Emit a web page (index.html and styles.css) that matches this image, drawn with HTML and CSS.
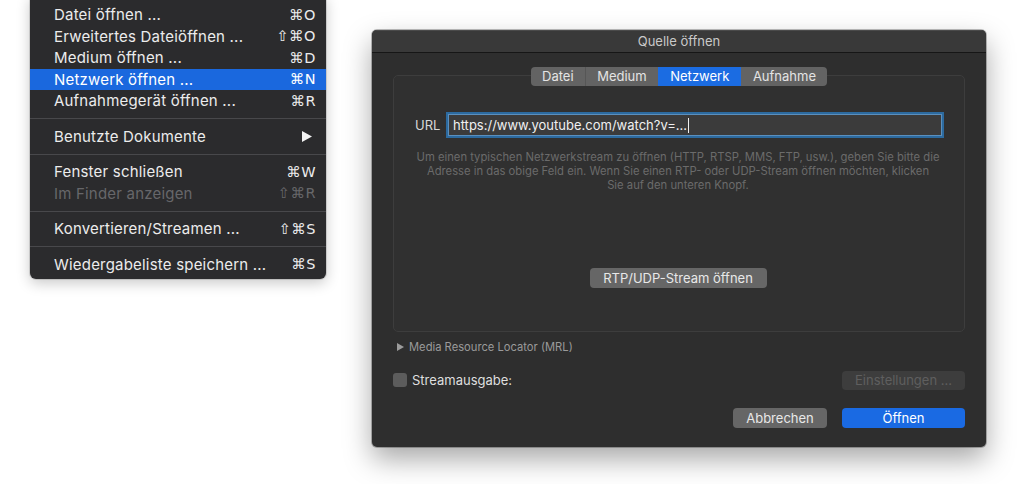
FILE: index.html
```html
<!DOCTYPE html>
<html lang="de">
<head>
<meta charset="utf-8">
<title>Quelle öffnen</title>
<link rel="stylesheet" href="styles.css">
</head>
<body>
<div class="desktop">
  <div class="menu">
    <div class="item"><span>Datei öffnen ...</span><span class="sc">⌘O</span></div>
    <div class="item"><span>Erweitertes Dateiöffnen ...</span><span class="sc">⇧⌘O</span></div>
    <div class="item"><span>Medium öffnen ...</span><span class="sc">⌘D</span></div>
    <div class="item selected"><span>Netzwerk öffnen ...</span><span class="sc">⌘N</span></div>
    <div class="item"><span>Aufnahmegerät öffnen ...</span><span class="sc">⌘R</span></div>
    <div class="sep"></div>
    <div class="item"><span>Benutzte Dokumente</span><svg class="sub" width="10" height="11" viewBox="0 0 10 11"><path d="M0 0 L10 5.5 L0 11 Z" fill="#f2f2f2"/></svg></div>
    <div class="sep"></div>
    <div class="item"><span>Fenster schließen</span><span class="sc">⌘W</span></div>
    <div class="item disabled"><span>Im Finder anzeigen</span><span class="sc">⇧⌘R</span></div>
    <div class="sep"></div>
    <div class="item"><span>Konvertieren/Streamen ...</span><span class="sc">⇧⌘S</span></div>
    <div class="sep"></div>
    <div class="item"><span>Wiedergabeliste speichern ...</span><span class="sc">⌘S</span></div>
  </div>

  <div class="dialog">
    <div class="titlebar">Quelle öffnen</div>
    <div class="dbody">
      <div class="tabs">
        <span class="tab">Datei</span><span class="tab">Medium</span><span class="tab active">Netzwerk</span><span class="tab">Aufnahme</span>
      </div>
      <div class="panel">
        <div class="urlrow">
          <span class="urllabel">URL</span>
          <div class="field">https://www.youtube.com/watch?v=...<span class="caret"></span></div>
        </div>
        <p class="help">Um einen typischen Netzwerkstream zu öffnen (HTTP, RTSP, MMS, FTP, usw.), geben Sie bitte die<br>Adresse in das obige Feld ein. Wenn Sie einen RTP- oder UDP-Stream öffnen möchten, klicken<br>Sie auf den unteren Knopf.</p>
        <div class="center"><span class="btn rtp">RTP/UDP-Stream öffnen</span></div>
      </div>
      <div class="mrl"><svg class="disc" width="7" height="8" viewBox="0 0 7 8"><path d="M0 0 L7 4 L0 8 Z" fill="#9c9c9c"/></svg><span>Media Resource Locator (MRL)</span></div>
      <div class="streamrow">
        <span class="chk"></span><span class="streamlabel">Streamausgabe:</span>
        <span class="btn disabledbtn">Einstellungen ...</span>
      </div>
      <div class="actions">
        <span class="btn cancel">Abbrechen</span>
        <span class="btn primary">Öffnen</span>
      </div>
    </div>
  </div>
</div>
</body>
</html>
```
FILE: styles.css
```css
* { box-sizing: border-box; }
html, body { margin: 0; padding: 0; }
body {
  background: #ffffff;
  width: 1024px;
  height: 484px;
  overflow: hidden;
  font-family: Inter, "Noto Sans", "DejaVu Sans", sans-serif;
}
.desktop { position: relative; width: 1024px; height: 484px; }

/* ---------- menu ---------- */
.menu {
  position: absolute;
  left: 30px;
  top: -6px;
  width: 296px;
  padding: 10px 0 4px;
  background: #2b2b2d;
  border-radius: 6px;
  box-shadow: 0 4px 14px rgba(0,0,0,0.22), 0 0 0 1px rgba(0,0,0,0.12);
  color: #ececec;
  font-size: 15px;
  letter-spacing: 0.2px;
}
.item {
  height: 21.5px;
  display: flex;
  align-items: center;
  justify-content: space-between;
  padding: 0 10px 0 24px;
  white-space: nowrap;
}
.item.selected { background: #1a68de; color: #fff; }
.item.disabled { color: #67676a; }
.sc { letter-spacing: 0.5px; font-family: "DejaVu Sans", Inter, sans-serif; font-size: 14.5px; }
.sub { margin-right: 4px; }
.sep {
  height: 14px;
  display: flex;
  align-items: center;
}
.sep::after {
  content: "";
  display: block;
  width: 100%;
  height: 1px;
  background: #48484b;
}

/* ---------- dialog ---------- */
.dialog {
  position: absolute;
  left: 372px;
  top: 30px;
  width: 614px;
  height: 417px;
  background: #2e2e2e;
  border-radius: 5px;
  box-shadow: 0 12px 28px rgba(0,0,0,0.35), 0 0 0 1px rgba(0,0,0,0.25);
  color: #dcdcdc;
  font-size: 13px;
  overflow: hidden;
}
.titlebar {
  height: 23px;
  background: #393939;
  border-bottom: 1px solid #161616;
  box-shadow: inset 0 1px 0 #4a4a4a;
  text-align: center;
  line-height: 23px;
  color: #c9c9c9;
  font-size: 13px;
}
.dbody {
  padding: 14px 21px 19px;
  display: flex;
  flex-direction: column;
}
.tabs {
  align-self: center;
  display: flex;
  height: 19px;
  position: relative;
  z-index: 2;
  border-radius: 4px;
  overflow: hidden;
  background: #636363;
}
.tab {
  line-height: 19px;
  padding: 0 11.3px;
  color: #e4e4e4;
  border-left: 1px solid #565656;
}
.tab:first-child { border-left: none; }
.tab.active { background: #1b6ce2; color: #ffffff; border-left-color: #1b6ce2; }
.tab.active + .tab { border-left-color: #636363; }

.panel {
  margin-top: -11px;
  height: 257px;
  border: 1px solid #3d3d3d;
  border-radius: 5px;
  background: #303030;
  padding: 39px 23px 0 21px;
}
.urlrow {
  display: flex;
  align-items: center;
}
.urllabel { width: 25px; color: #d8d8d8; }
.field {
  margin-left: 9px;
  flex: 1;
  height: 20px;
  line-height: 20px;
  padding-left: 4px;
  background: #3b3b3b;
  color: #f0f0f0;
  box-shadow: 0 0 0 1px #5b8fbd, 0 0 0 3px #2c6a9f;
  white-space: nowrap;
}
.caret {
  display: inline-block;
  width: 1px;
  height: 15px;
  background: #f0f0f0;
  vertical-align: -3px;
  margin-left: 1px;
}
.help {
  margin: 15px 0 0;
  text-align: center;
  font-size: 11.25px;
  line-height: 14px;
  color: #6b6b6b;
  white-space: nowrap;
}
.center { display: flex; justify-content: center; margin-top: 76px; }
.btn {
  display: inline-flex;
  align-items: center;
  justify-content: center;
  height: 20px;
  border-radius: 4px;
  background: #666666;
  color: #e8e8e8;
  font-size: 13px;
}
.rtp { width: 177px; }

.mrl {
  margin-top: 8px;
  height: 14px;
  display: flex;
  align-items: center;
  font-size: 11.2px;
  color: #9a9a9a;
  padding-left: 4px;
}
.disc { margin-right: 5px; }
.streamrow {
  margin-top: 16px;
  display: flex;
  align-items: center;
  height: 20px;
}
.chk {
  width: 14px;
  height: 14px;
  border-radius: 3px;
  background: #5c5c5c;
}
.streamlabel { margin-left: 5px; color: #dedede; }
.disabledbtn {
  margin-left: auto;
  width: 123px;
  height: 19px;
  background: #3d3d3d;
  color: #5f5f5f;
}
.actions {
  margin-top: 18px;
  display: flex;
  justify-content: flex-end;
  gap: 15px;
}
.cancel { width: 94px; }
.primary { width: 123px; background: #1a6ae3; color: #ffffff; }
```
